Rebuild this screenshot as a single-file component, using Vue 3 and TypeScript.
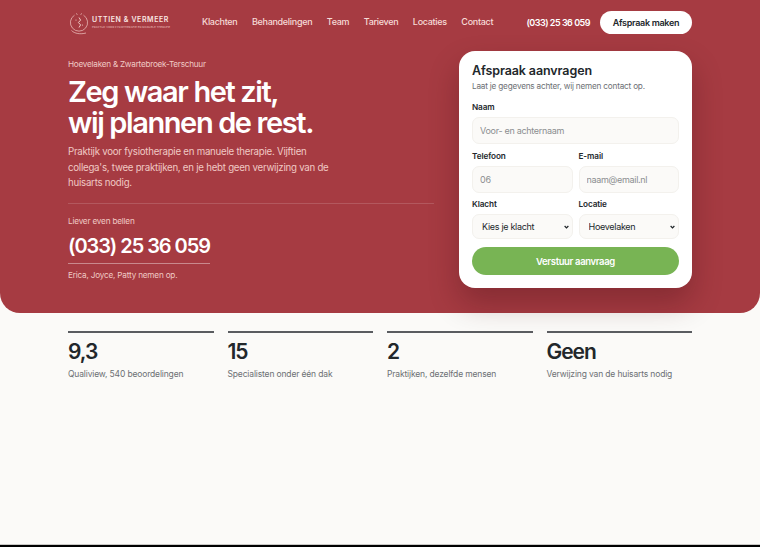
<script setup lang="ts">
const links = ['Klachten', 'Behandelingen', 'Team', 'Tarieven', 'Locaties', 'Contact'];

const stats = [
  { value: '9,3', label: 'Qualiview, 540 beoordelingen' },
  { value: '15', label: 'Specialisten onder één dak' },
  { value: '2', label: 'Praktijken, dezelfde mensen' },
  { value: 'Geen', label: 'Verwijzing van de huisarts nodig' },
];
</script>

<template>
  <div class="page">
    <section class="hero">
      <header class="nav">
        <a class="logo">
          <svg class="logo-mark" viewBox="0 0 22 24" fill="none" stroke="#f0c9c4" stroke-width="0.7">
            <path d="M6.5 4.2A8.6 8.6 0 1 0 15.5 4.2" />
            <path d="M8 2.5l1.5 1M14 2.5l-1.5 1M3.5 19.5c3 3.2 9 4 14.5 2.5" />
            <path d="M11 6.5l1.6 2.6-2.2 2.4 2.2 2.4-1.6 2.6" stroke-width="1" />
            <circle cx="8" cy="9" r="0.6" fill="#f0c9c4" stroke="none" />
            <circle cx="14.5" cy="14" r="0.6" fill="#f0c9c4" stroke="none" />
          </svg>
          <span class="logo-text">
            <span class="logo-name">UTTIEN &amp; VERMEER</span>
            <span class="logo-tag">PRAKTIJK VOOR FYSIOTHERAPIE EN MANUELE THERAPIE</span>
          </span>
        </a>
        <nav class="links">
          <a v-for="link in links" :key="link">{{ link }}</a>
        </nav>
        <div class="nav-right">
          <a class="nav-phone">(033) 25 36 059</a>
          <a class="nav-cta">Afspraak maken</a>
        </div>
      </header>

      <div class="hero-body">
        <div class="intro">
          <p class="places">Hoevelaken &amp; Zwartebroek-Terschuur</p>
          <h1>Zeg waar het zit,<br />wij plannen de rest.</h1>
          <p class="lead">
            Praktijk voor fysiotherapie en manuele therapie. Vijftien collega's, twee praktijken, en je hebt geen verwijzing van de huisarts nodig.
          </p>
          <div class="call">
            <p class="call-label">Liever even bellen</p>
            <a class="call-number">(033) 25 36 059</a>
            <p class="call-note">Erica, Joyce, Patty nemen op.</p>
          </div>
        </div>

        <form class="card" @submit.prevent>
          <h2>Afspraak aanvragen</h2>
          <p class="card-sub">Laat je gegevens achter, wij nemen contact op.</p>
          <label class="field">
            <span>Naam</span>
            <input type="text" placeholder="Voor- en achternaam" />
          </label>
          <div class="field-row">
            <label class="field">
              <span>Telefoon</span>
              <input type="tel" placeholder="06" />
            </label>
            <label class="field">
              <span>E-mail</span>
              <input type="email" placeholder="naam@email.nl" />
            </label>
          </div>
          <div class="field-row">
            <label class="field">
              <span>Klacht</span>
              <div class="select-wrap">
                <select>
                  <option>Kies je klacht</option>
                </select>
                <svg class="chevron" viewBox="0 0 8 6" fill="none" stroke="#22272b" stroke-width="2">
                  <path d="M1 1.5l3 3 3-3" />
                </svg>
              </div>
            </label>
            <label class="field">
              <span>Locatie</span>
              <div class="select-wrap">
                <select>
                  <option>Hoevelaken</option>
                </select>
                <svg class="chevron" viewBox="0 0 8 6" fill="none" stroke="#22272b" stroke-width="2">
                  <path d="M1 1.5l3 3 3-3" />
                </svg>
              </div>
            </label>
          </div>
          <button type="submit">Verstuur aanvraag</button>
        </form>
      </div>
    </section>

    <section class="stats">
      <div v-for="stat in stats" :key="stat.value" class="stat">
        <strong>{{ stat.value }}</strong>
        <span>{{ stat.label }}</span>
      </div>
    </section>
  </div>
</template>

<style>
html,
body {
  background: #000;
}
</style>

<style scoped>
.page {
  height: 545px;
  overflow: hidden;
  background: #fbfaf8;
  border-bottom: 1px solid #c9c8c5;
  box-sizing: border-box;
  font-family: Inter, "Liberation Sans", sans-serif;
  color: #22272b;
}

.hero {
  height: 313px;
  box-sizing: border-box;
  padding: 0 68px;
  background: #a63b42;
  border-radius: 0 0 20px 20px;
}

.nav {
  display: flex;
  align-items: center;
  height: 45px;
}

.logo {
  display: flex;
  align-items: center;
  gap: 2px;
  width: 134px;
}

.logo-mark {
  width: 22px;
  height: 24px;
  flex: none;
}

.logo-text {
  display: flex;
  flex-direction: column;
  gap: 1px;
  margin-top: -2px;
}

.logo-name {
  font-size: 7px;
  font-weight: 600;
  letter-spacing: 0.085em;
  color: #f9e6e3;
  white-space: nowrap;
}

.logo-tag {
  font-size: 2.6px;
  letter-spacing: 0.05em;
  color: #f0c9c4;
  white-space: nowrap;
}

.links {
  display: flex;
  gap: 14.5px;
  margin-bottom: 3px;
  font-size: 9px;
  font-weight: 500;
  letter-spacing: -0.3px;
  color: #f6dcd8;
  white-space: nowrap;
}

.nav-right {
  display: flex;
  align-items: center;
  gap: 10px;
  margin-left: auto;
}

.nav-phone {
  font-size: 9px;
  font-weight: 600;
  letter-spacing: -0.5px;
  color: #fff;
  white-space: nowrap;
}

.nav-cta {
  display: flex;
  align-items: center;
  justify-content: center;
  width: 92px;
  height: 23px;
  border-radius: 12px;
  background: #fff;
  font-size: 9px;
  font-weight: 600;
  letter-spacing: -0.3px;
}

.hero-body {
  display: flex;
  justify-content: space-between;
  padding-top: 6px;
}

.intro {
  width: 366px;
  padding-top: 7px;
}

.places {
  margin: 0;
  font-size: 8.2px;
  letter-spacing: -0.25px;
  line-height: 12px;
  color: #f0c9c4;
}

h1 {
  margin: 6px 0 0;
  font-size: 29px;
  line-height: 31px;
  font-weight: 600;
  letter-spacing: -0.048em;
  color: #fff;
}

.lead {
  margin: 6px 0 0;
  width: 264px;
  font-size: 9.7px;
  line-height: 15.5px;
  letter-spacing: -0.25px;
  color: #f0c9c4;
}

.call {
  margin-top: 12px;
  padding-top: 11px;
  border-top: 1px solid rgba(255, 255, 255, 0.15);
}

.call-label {
  margin: 0;
  font-size: 8.2px;
  letter-spacing: -0.2px;
  line-height: 12px;
  color: #f0c9c4;
}

.call-number {
  display: inline-block;
  margin-top: 7px;
  padding-bottom: 5px;
  border-bottom: 1px solid rgba(255, 255, 255, 0.4);
  font-size: 20px;
  line-height: 24px;
  font-weight: 600;
  letter-spacing: -0.053em;
  color: #fff;
}

.call-note {
  margin: 5px 0 0;
  font-size: 8.2px;
  letter-spacing: -0.2px;
  line-height: 12px;
  color: #f0c9c4;
}

.card {
  width: 233px;
  height: 237px;
  box-sizing: border-box;
  padding: 12px 13px 0;
  background: #fff;
  border-radius: 16px;
  box-shadow: 0 15px 30px rgba(60, 10, 15, 0.3);
}

h2 {
  margin: 0;
  font-size: 12.5px;
  line-height: 15px;
  font-weight: 600;
  letter-spacing: -0.1px;
}

.card-sub {
  margin: 2px 0 9px;
  font-size: 8.2px;
  line-height: 12px;
  letter-spacing: -0.2px;
  color: #6c7074;
}

.field {
  display: flex;
  flex-direction: column;
  flex: 1;
  min-width: 0;
}

.field span {
  font-size: 8.2px;
  line-height: 12px;
  font-weight: 600;
  letter-spacing: -0.1px;
  margin-bottom: 4px;
}

.field-row {
  display: flex;
  gap: 6px;
  margin-top: 5.5px;
}

.select-wrap {
  position: relative;
}

.chevron {
  position: absolute;
  top: 10.5px;
  right: 4px;
  width: 5px;
  height: 4px;
  pointer-events: none;
}

input,
select {
  display: block;
  box-sizing: border-box;
  width: 100%;
  height: 27px;
  padding: 0 7px;
  background: #fbfaf8;
  border: 1px solid #f3f1ed;
  border-radius: 7px;
  font-family: inherit;
  font-size: 9px;
  letter-spacing: -0.3px;
  color: #22272b;
}

select {
  height: 25px;
  padding: 0 9px;
  appearance: none;
}

input::placeholder {
  color: #8b8e90;
}

button {
  display: block;
  width: 100%;
  height: 28px;
  margin-top: 8px;
  border: 0;
  border-radius: 14px;
  background: #78b454;
  font-family: inherit;
  font-size: 9.5px;
  font-weight: 600;
  letter-spacing: -0.35px;
  color: #fff;
}

.stats {
  display: grid;
  grid-template-columns: repeat(4, 1fr);
  gap: 14px;
  padding: 18px 68px 0;
}

.stat {
  display: flex;
  flex-direction: column;
  border-top: 2px solid #5a5c60;
  padding-top: 6px;
}

.stat strong {
  font-size: 21px;
  line-height: 26px;
  font-weight: 600;
  letter-spacing: -0.05em;
}

.stat span {
  margin-top: 3px;
  font-size: 8.5px;
  line-height: 12px;
  letter-spacing: -0.15px;
  color: #6c7074;
}
</style>
